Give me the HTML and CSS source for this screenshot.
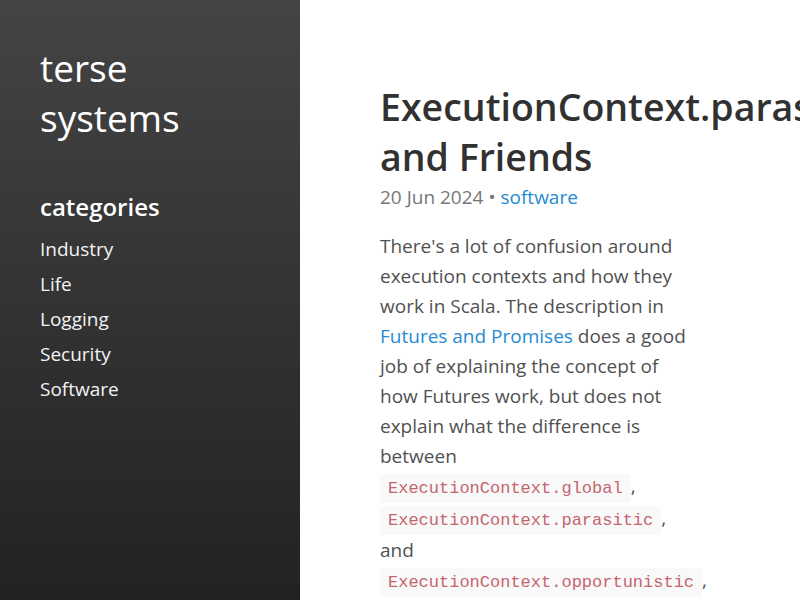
FILE: index.html
```html
<!DOCTYPE html>
<html lang="en">
<head>
<meta charset="utf-8">
<title>ExecutionContext.parasitic and Friends</title>
<link rel="stylesheet" href="styles.css">
</head>
<body>
<aside class="sidebar">
  <h1 class="site-title">terse systems</h1>
  <nav class="categories">
    <h2 class="categories-title">categories</h2>
    <ul class="category-list">
      <li><a href="#">Industry</a></li>
      <li><a href="#">Life</a></li>
      <li><a href="#">Logging</a></li>
      <li><a href="#">Security</a></li>
      <li><a href="#">Software</a></li>
    </ul>
  </nav>
</aside>
<main class="main">
  <article class="post">
    <h1 class="post-title">ExecutionContext.parasitic and Friends</h1>
    <div class="post-meta">20 Jun 2024 • <a href="#">software</a></div>
    <p>There's a lot of confusion around execution contexts and how they work in Scala. The description in <a href="#">Futures and Promises</a> does a good job of explaining the concept of how Futures work, but does not explain what the difference is between <code>ExecutionContext.global</code>, <code>ExecutionContext.parasitic</code>, and <code>ExecutionContext.opportunistic</code>, and when you should use each one.</p>
  </article>
</main>
</body>
</html>
```
FILE: styles.css
```css
* { box-sizing: border-box; }
html, body { margin: 0; padding: 0; height: 100%; }
body {
  display: flex;
  overflow: hidden;
  font-family: "Open Sans", "Noto Sans", sans-serif;
  background: #fff;
}
a { text-decoration: none; }
.sidebar {
  flex: 0 0 300px;
  height: 100vh;
  padding: 43px 40px 0 40px;
  background: linear-gradient(to bottom, #444444 0%, #222222 100%);
  color: #fff;
}
.site-title {
  margin: 0;
  font-size: 37px;
  line-height: 50px;
  font-weight: 400;
}
.categories { margin-top: 46px; }
.categories-title {
  margin: 0;
  font-size: 24px;
  line-height: 36px;
  font-weight: 600;
}
.category-list {
  list-style: none;
  margin: 7px 0 0 0;
  padding: 0;
  font-size: 19px;
  line-height: 35px;
}
.category-list a { color: #f2f2f2; }
.main {
  flex: 1;
  height: 100vh;
  overflow-y: scroll;
  overflow-x: hidden;
  padding: 82px 0 0 80px;
}
.post {
  width: 318px;
  min-height: 17000px;
  color: #515151;
  font-size: 19px;
  line-height: 30px;
}
.post-title {
  margin: 0;
  font-size: 37.5px;
  line-height: 50px;
  font-weight: 600;
  color: #313131;
}
.post-meta {
  color: #777;
  line-height: 30px;
}
.post-meta a, .post p a { color: #268bd2; }
.post p { margin: 19px 0 0 0; }
code {
  font-family: "Liberation Mono", "Courier New", monospace;
  font-size: 17px;
  line-height: 29px;
  padding: 5px 8px;
  color: #c4656f;
  background: #f9f9f9;
  border-radius: 3px;
}
```
